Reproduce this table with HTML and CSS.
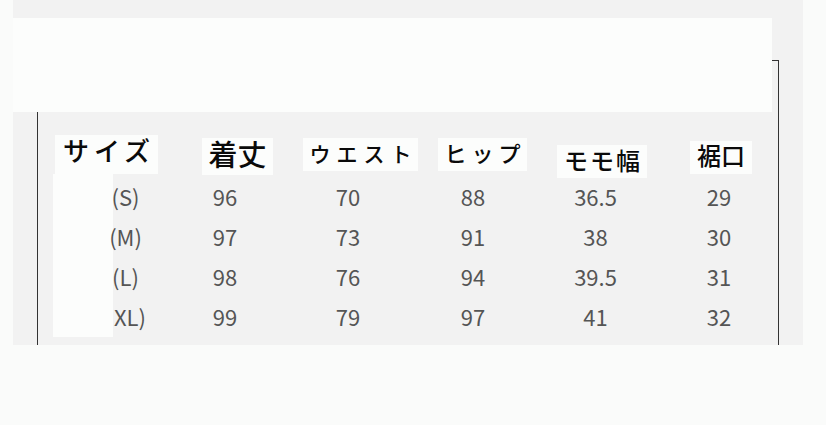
FILE: index.html
```html
<!DOCTYPE html>
<html lang="ja">
  <head>
    <meta charset="UTF-8" />
    <meta name="viewport" content="width=device-width, initial-scale=1.0" />
    <title>サイズ表</title>
    <link rel="stylesheet" href="styles.css">
  </head>
  <body>
    <div class="panel">
      <!-- 上部の白い帯とサイズ列の白い当て布 -->
      <div class="cover-size"></div>

      <div class="frame">
        <div class="head-row">
          <div class="head-cell head-size">サイズ</div>
          <div class="head-cell head-length">着丈</div>
          <div class="head-cell head-waist">ウエスト</div>
          <div class="head-cell head-hip">ヒップ</div>
          <div class="head-cell head-thigh">モモ幅</div>
          <div class="head-cell head-hem">裾口</div>
        </div>

        <div class="size-table">
          <div class="cell">(S)</div>
          <div class="cell">96</div>
          <div class="cell">70</div>
          <div class="cell">88</div>
          <div class="cell">36.5</div>
          <div class="cell">29</div>

          <div class="cell">(M)</div>
          <div class="cell">97</div>
          <div class="cell">73</div>
          <div class="cell">91</div>
          <div class="cell">38</div>
          <div class="cell">30</div>

          <div class="cell">(L)</div>
          <div class="cell">98</div>
          <div class="cell">76</div>
          <div class="cell">94</div>
          <div class="cell">39.5</div>
          <div class="cell">31</div>

          <div class="cell cell-xl">XL)</div>
          <div class="cell">99</div>
          <div class="cell">79</div>
          <div class="cell">97</div>
          <div class="cell">41</div>
          <div class="cell">32</div>
        </div>
      </div>

      <div class="cover-top"></div>
    </div>
  </body>
</html>
```

FILE: styles.css
```css
body {
  margin: 0;
  padding: 0;
  background-color: #fafbfa;
  font-family: "Noto Sans CJK JP", "Noto Sans", sans-serif;
  color: #111;
}

.panel {
  position: relative;
  margin-left: 13px;
  width: 790px;
  height: 345px;
  padding-top: 60px;
  box-sizing: border-box;
  background-color: #f2f2f2;
}

.frame {
  position: relative;
  margin-left: 24px;
  width: 742px;
  height: 285px;
  box-sizing: border-box;
  border: 1px solid #333;
  border-bottom: none;
  padding-top: 74px;
}

.head-row {
  display: flex;
  align-items: flex-start;
  height: 41px;
  padding-left: 17px;
}

.head-cell {
  display: flex;
  justify-content: center;
  align-items: center;
  box-sizing: border-box;
  background-color: #fcfdfc;
  color: #0a0a0a;
  font-weight: 500;
  line-height: 1;
}

.head-size {
  width: 103px;
  height: 39px;
  padding: 0 0 9px 5px;
  font-size: 26px;
  letter-spacing: 5px;
}

.head-length {
  width: 71px;
  height: 37px;
  margin: 3px 0 0 44px;
  padding-bottom: 7px;
  font-size: 29px;
}

.head-waist {
  width: 115px;
  height: 33px;
  margin: 3px 0 0 30px;
  padding: 0 0 3px 6px;
  font-size: 21px;
  letter-spacing: 6px;
}

.head-hip {
  width: 89px;
  height: 33px;
  margin: 3px 0 0 20px;
  padding: 0 0 5px 5px;
  font-size: 22px;
  letter-spacing: 5px;
}

.head-thigh {
  width: 90px;
  height: 33px;
  margin: 10px 0 0 30px;
  padding: 0 0 3px 2px;
  font-size: 24px;
  letter-spacing: 2px;
}

.head-hem {
  width: 62px;
  height: 33px;
  margin: 6px 0 0 43px;
  padding-bottom: 5px;
  font-size: 24px;
}

.size-table {
  display: grid;
  grid-template-columns: 125px 74px 172px 78px 167px 80px;
  grid-auto-rows: 40px;
  margin-left: 25px;
}

.cell {
  display: flex;
  justify-content: center;
  align-items: center;
  font-size: 22px;
  color: #555;
}

.cell-xl {
  padding-left: 9px;
}

.cover-top {
  position: absolute;
  left: 0;
  top: 18px;
  width: 759px;
  height: 94px;
  background-color: #fcfdfc;
}

.cover-size {
  position: absolute;
  left: 40px;
  top: 174px;
  width: 60px;
  height: 163px;
  background-color: #fcfdfc;
}
```
